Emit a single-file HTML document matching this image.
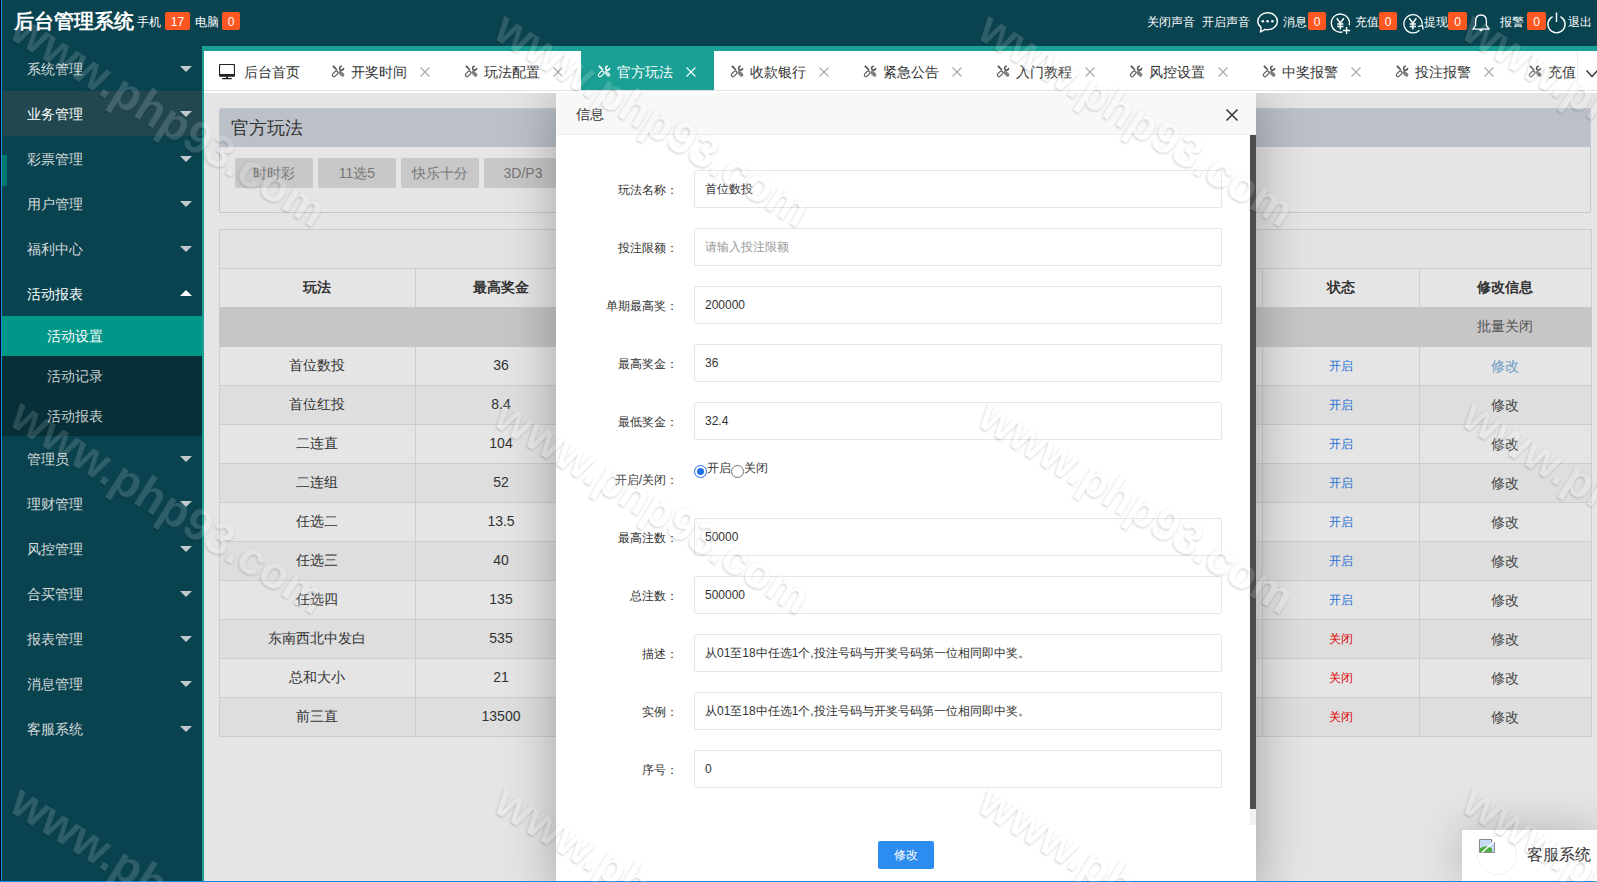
<!DOCTYPE html><html><head><meta charset="utf-8"><style>
*{margin:0;padding:0;box-sizing:border-box}
html,body{width:1597px;height:882px;overflow:hidden;background:#e5e5e5;font-family:"Liberation Sans",sans-serif;font-size:14px;color:#333}
div,span{position:absolute;white-space:nowrap}
svg{position:absolute;overflow:visible}
#hdr{left:0;top:0;width:1597px;height:46px;background:#09434f}
.t{line-height:1}
.badge{background:#ff5722;color:#fff;font-size:12px;text-align:center;border-radius:2px}
#side{left:0;top:46px;width:202px;height:836px;background:#09434f;overflow:hidden}
.mi{left:0;width:202px;height:45px;color:#d5dadb;font-size:14px}
.mi span{left:27px;top:15px;line-height:16px}
.tri{left:180px;top:20px;width:0;height:0;border-left:6px solid transparent;border-right:6px solid transparent;border-top:6px solid #c2c9cc}
.triu{left:180px;top:19px;width:0;height:0;border-left:6px solid transparent;border-right:6px solid transparent;border-bottom:6px solid #fff}
.sub{left:0;width:202px;height:40px;background:#062f38;color:#c9cfd1}
.sub span{left:47px;top:12px;line-height:16px}
#tabframe{left:202px;top:46px;width:1395px;height:836px;background:#1aa094}
#tabs{left:204px;top:51px;width:1393px;height:39px;background:#fff}
.tab{top:0;height:39px;color:#333;font-size:14px}
.tab span{top:12px;line-height:16px}
.tab.act{background:#1aa094;color:#fff}
.wm{font-family:'Liberation Sans',sans-serif;font-weight:bold;font-size:46px;line-height:1;color:#fff;filter:url(#wmf);transform-origin:0 0;transform:rotate(32deg)}
#content{left:204px;top:90px;width:1393px;height:792px;background:#e5e5e5;overflow:hidden}
</style></head><body>
<div id="hdr">
<span class="t" style="left:14px;top:11px;font-size:20px;font-weight:bold;color:#fff">后台管理系统</span>
<span class="t" style="left:137px;top:16px;font-size:12px;color:#fff">手机</span>
<span class="badge t" style="left:165px;top:12px;width:25px;height:18px;line-height:20px">17</span>
<span class="t" style="left:195px;top:16px;font-size:12px;color:#fff">电脑</span>
<span class="badge t" style="left:222px;top:12px;width:18px;height:18px;line-height:20px">0</span>
<span class="t" style="left:1147px;top:16px;font-size:12px;color:#fff">关闭声音</span>
<span class="t" style="left:1202px;top:16px;font-size:12px;color:#fff">开启声音</span>
<svg style="left:1257px;top:12px" width="22" height="21" viewBox="0 0 22 21"><path d="M10.6 0.8C5.2 0.8 0.8 4.5 0.8 9.2c0 2.5 1.3 4.7 3.3 6.2L3.5 20l4.6-2.6c0.8 0.2 1.6 0.3 2.5 0.3 5.4 0 9.8-3.8 9.8-8.5S16 0.8 10.6 0.8z" fill="none" stroke="#fff" stroke-width="1.4" stroke-linejoin="round"/><circle cx="5.8" cy="9.3" r="1.3" fill="#fff"/><circle cx="10.6" cy="9.3" r="1.3" fill="#fff"/><circle cx="15.4" cy="9.3" r="1.3" fill="#fff"/></svg>
<span class="t" style="left:1283px;top:16px;font-size:12px;color:#fff">消息</span>
<span class="badge t" style="left:1308px;top:12px;width:18px;height:18px;line-height:20px">0</span>
<svg style="left:1331px;top:13px" width="20" height="21" viewBox="0 0 20 21"><path d="M11.7 18.9A9.1 9.1 0 1 1 18.2 12.4" fill="none" stroke="#fff" stroke-width="1.3"/><path d="M5.8 5.2L9.3 10.2L12.8 5.2M9.3 10.2V16.5M6.2 11H12.4M6.2 13.6H12.4" fill="none" stroke="#fff" stroke-width="1.5"/><path d="M15.6 14V21M12.1 17.5H19.1" stroke="#fff" stroke-width="1.4"/></svg>
<span class="t" style="left:1355px;top:16px;font-size:12px;color:#fff">充值</span>
<span class="badge t" style="left:1379px;top:12px;width:18px;height:18px;line-height:20px">0</span>
<svg style="left:1403px;top:13px" width="21" height="21" viewBox="0 0 21 21"><path d="M16.5 17.2A9.1 9.1 0 1 1 19.1 11.5" fill="none" stroke="#fff" stroke-width="1.3"/><path d="M15.2 13.6L19.3 12.3L20.2 16.5" fill="none" stroke="#fff" stroke-width="1.3"/><path d="M6.3 5.2L9.8 10.2L13.3 5.2M9.8 10.2V16.5M6.7 11H12.9M6.7 13.6H12.9" fill="none" stroke="#fff" stroke-width="1.5"/></svg>
<span class="t" style="left:1424px;top:16px;font-size:12px;color:#fff">提现</span>
<span class="badge t" style="left:1448px;top:12px;width:19px;height:18px;line-height:20px">0</span>
<svg style="left:1472px;top:14px" width="18" height="18" viewBox="0 0 18 18"><path d="M9 1C5.4 1 3.6 3.8 3.6 7.2V11.5L1 15.2H17L14.4 11.5V7.2C14.4 3.8 12.6 1 9 1Z" fill="none" stroke="#fff" stroke-width="1.3" stroke-linejoin="round"/><path d="M7.6 15.4A1.4 1.4 0 0 0 10.4 15.4" fill="#fff" stroke="#fff" stroke-width="1"/></svg>
<span class="t" style="left:1500px;top:16px;font-size:12px;color:#fff">报警</span>
<span class="badge t" style="left:1527px;top:12px;width:19px;height:18px;line-height:20px">0</span>
<svg style="left:1547px;top:12px" width="20" height="21" viewBox="0 0 20 21"><path d="M5.6 4.6A8.6 8.6 0 1 0 13.4 4.6" fill="none" stroke="#fff" stroke-width="1.4"/><path d="M9.5 0.5V10" stroke="#fff" stroke-width="1.4"/></svg>
<span class="t" style="left:1568px;top:16px;font-size:12px;color:#fff">退出</span>
</div>
<div id="side">
<div class="mi" style="top:0px;"><span>系统管理</span><div class="tri"></div></div>
<div class="mi" style="top:45px;background:#22474f;color:#fff;"><span>业务管理</span><div class="tri"></div></div>
<div class="mi" style="top:90px;"><span>彩票管理</span><div class="tri"></div></div>
<div class="mi" style="top:135px;"><span>用户管理</span><div class="tri"></div></div>
<div class="mi" style="top:180px;"><span>福利中心</span><div class="tri"></div></div>
<div class="mi" style="top:225px;color:#fff;"><span>活动报表</span><div class="triu"></div></div>
<div class="sub" style="top:270px;background:#009688;color:#fff;"><span>活动设置</span></div>
<div class="sub" style="top:310px;"><span>活动记录</span></div>
<div class="sub" style="top:350px;"><span>活动报表</span></div>
<div class="mi" style="top:390px"><span>管理员</span><div class="tri"></div></div>
<div class="mi" style="top:435px"><span>理财管理</span><div class="tri"></div></div>
<div class="mi" style="top:480px"><span>风控管理</span><div class="tri"></div></div>
<div class="mi" style="top:525px"><span>合买管理</span><div class="tri"></div></div>
<div class="mi" style="top:570px"><span>报表管理</span><div class="tri"></div></div>
<div class="mi" style="top:615px"><span>消息管理</span><div class="tri"></div></div>
<div class="mi" style="top:660px"><span>客服系统</span><div class="tri"></div></div>
<div style="left:2px;top:109px;width:5px;height:31px;background:#00786e"></div>
</div>
<div style="left:0;top:0;width:1px;height:882px;background:#030b1f"></div><div style="left:1px;top:0;width:1px;height:882px;background:#1a88e0"></div>
<div id="tabframe"></div>
<div id="tabs">
<svg style="left:15px;top:13px" width="16" height="16" viewBox="0 0 16 16"><path fill-rule="evenodd" d="M1 0H15Q16 0 16 1V11.7Q16 12.7 15 12.7H1Q0 12.7 0 11.7V1Q0 0 1 0ZM1.1 1.1V10.1H14.9V1.1Z" fill="#222"/><rect x="7" y="12.5" width="2" height="1.6" fill="#222"/><rect x="3" y="14" width="10" height="1.2" rx="0.6" fill="#222"/></svg>
<span class="t" style="left:40px;top:14px;font-size:14px;color:#333">后台首页</span>
<svg style="left:128px;top:14px" width="13" height="12" viewBox="0 0 13 12"><g fill="#555" stroke="#555"><path d="M0.3 1.5L1.5 0.3L2.6 1.2L5.5 4.5L4.5 5.5L1.2 2.6Z" stroke="none"/><g transform="rotate(45 3.2 8.8)"><rect x="1.5" y="5.6" width="3.4" height="6.6" rx="1.7" fill="none" stroke-width="1.1"/></g><g transform="rotate(-45 9.3 8.6)"><rect x="7.5" y="5.2" width="3.6" height="7" rx="1.8" stroke="none" fill-opacity=".75"/></g><path d="M11.5 2.9A1.95 1.95 0 1 1 9.9 1.3" fill="none" stroke-width="1.6"/></g></svg>
<span class="t" style="left:147px;top:14px;font-size:14px;color:#333">开奖时间</span>
<svg style="left:216px;top:16px" width="10" height="10" viewBox="0 0 10 10"><path d="M0.5 0.5l9 9M9.5 0.5l-9 9" stroke="#a8a8a8" stroke-width="1.1"/></svg>
<svg style="left:261px;top:14px" width="13" height="12" viewBox="0 0 13 12"><g fill="#555" stroke="#555"><path d="M0.3 1.5L1.5 0.3L2.6 1.2L5.5 4.5L4.5 5.5L1.2 2.6Z" stroke="none"/><g transform="rotate(45 3.2 8.8)"><rect x="1.5" y="5.6" width="3.4" height="6.6" rx="1.7" fill="none" stroke-width="1.1"/></g><g transform="rotate(-45 9.3 8.6)"><rect x="7.5" y="5.2" width="3.6" height="7" rx="1.8" stroke="none" fill-opacity=".75"/></g><path d="M11.5 2.9A1.95 1.95 0 1 1 9.9 1.3" fill="none" stroke-width="1.6"/></g></svg>
<span class="t" style="left:280px;top:14px;font-size:14px;color:#333">玩法配置</span>
<svg style="left:349px;top:16px" width="10" height="10" viewBox="0 0 10 10"><path d="M0.5 0.5l9 9M9.5 0.5l-9 9" stroke="#a8a8a8" stroke-width="1.1"/></svg>
<div style="left:377px;top:0;width:133px;height:39px;background:#1aa094"></div>
<svg style="left:394px;top:14px" width="13" height="12" viewBox="0 0 13 12"><g fill="#fff" stroke="#fff"><path d="M0.3 1.5L1.5 0.3L2.6 1.2L5.5 4.5L4.5 5.5L1.2 2.6Z" stroke="none"/><g transform="rotate(45 3.2 8.8)"><rect x="1.5" y="5.6" width="3.4" height="6.6" rx="1.7" fill="none" stroke-width="1.1"/></g><g transform="rotate(-45 9.3 8.6)"><rect x="7.5" y="5.2" width="3.6" height="7" rx="1.8" stroke="none" fill-opacity=".75"/></g><path d="M11.5 2.9A1.95 1.95 0 1 1 9.9 1.3" fill="none" stroke-width="1.6"/></g></svg>
<span class="t" style="left:413px;top:14px;font-size:14px;color:#fff">官方玩法</span>
<svg style="left:482px;top:16px" width="10" height="10" viewBox="0 0 10 10"><path d="M0.5 0.5l9 9M9.5 0.5l-9 9" stroke="#fff" stroke-width="1.1"/></svg>
<svg style="left:527px;top:14px" width="13" height="12" viewBox="0 0 13 12"><g fill="#555" stroke="#555"><path d="M0.3 1.5L1.5 0.3L2.6 1.2L5.5 4.5L4.5 5.5L1.2 2.6Z" stroke="none"/><g transform="rotate(45 3.2 8.8)"><rect x="1.5" y="5.6" width="3.4" height="6.6" rx="1.7" fill="none" stroke-width="1.1"/></g><g transform="rotate(-45 9.3 8.6)"><rect x="7.5" y="5.2" width="3.6" height="7" rx="1.8" stroke="none" fill-opacity=".75"/></g><path d="M11.5 2.9A1.95 1.95 0 1 1 9.9 1.3" fill="none" stroke-width="1.6"/></g></svg>
<span class="t" style="left:546px;top:14px;font-size:14px;color:#333">收款银行</span>
<svg style="left:615px;top:16px" width="10" height="10" viewBox="0 0 10 10"><path d="M0.5 0.5l9 9M9.5 0.5l-9 9" stroke="#a8a8a8" stroke-width="1.1"/></svg>
<svg style="left:660px;top:14px" width="13" height="12" viewBox="0 0 13 12"><g fill="#555" stroke="#555"><path d="M0.3 1.5L1.5 0.3L2.6 1.2L5.5 4.5L4.5 5.5L1.2 2.6Z" stroke="none"/><g transform="rotate(45 3.2 8.8)"><rect x="1.5" y="5.6" width="3.4" height="6.6" rx="1.7" fill="none" stroke-width="1.1"/></g><g transform="rotate(-45 9.3 8.6)"><rect x="7.5" y="5.2" width="3.6" height="7" rx="1.8" stroke="none" fill-opacity=".75"/></g><path d="M11.5 2.9A1.95 1.95 0 1 1 9.9 1.3" fill="none" stroke-width="1.6"/></g></svg>
<span class="t" style="left:679px;top:14px;font-size:14px;color:#333">紧急公告</span>
<svg style="left:748px;top:16px" width="10" height="10" viewBox="0 0 10 10"><path d="M0.5 0.5l9 9M9.5 0.5l-9 9" stroke="#a8a8a8" stroke-width="1.1"/></svg>
<svg style="left:793px;top:14px" width="13" height="12" viewBox="0 0 13 12"><g fill="#555" stroke="#555"><path d="M0.3 1.5L1.5 0.3L2.6 1.2L5.5 4.5L4.5 5.5L1.2 2.6Z" stroke="none"/><g transform="rotate(45 3.2 8.8)"><rect x="1.5" y="5.6" width="3.4" height="6.6" rx="1.7" fill="none" stroke-width="1.1"/></g><g transform="rotate(-45 9.3 8.6)"><rect x="7.5" y="5.2" width="3.6" height="7" rx="1.8" stroke="none" fill-opacity=".75"/></g><path d="M11.5 2.9A1.95 1.95 0 1 1 9.9 1.3" fill="none" stroke-width="1.6"/></g></svg>
<span class="t" style="left:812px;top:14px;font-size:14px;color:#333">入门教程</span>
<svg style="left:881px;top:16px" width="10" height="10" viewBox="0 0 10 10"><path d="M0.5 0.5l9 9M9.5 0.5l-9 9" stroke="#a8a8a8" stroke-width="1.1"/></svg>
<svg style="left:926px;top:14px" width="13" height="12" viewBox="0 0 13 12"><g fill="#555" stroke="#555"><path d="M0.3 1.5L1.5 0.3L2.6 1.2L5.5 4.5L4.5 5.5L1.2 2.6Z" stroke="none"/><g transform="rotate(45 3.2 8.8)"><rect x="1.5" y="5.6" width="3.4" height="6.6" rx="1.7" fill="none" stroke-width="1.1"/></g><g transform="rotate(-45 9.3 8.6)"><rect x="7.5" y="5.2" width="3.6" height="7" rx="1.8" stroke="none" fill-opacity=".75"/></g><path d="M11.5 2.9A1.95 1.95 0 1 1 9.9 1.3" fill="none" stroke-width="1.6"/></g></svg>
<span class="t" style="left:945px;top:14px;font-size:14px;color:#333">风控设置</span>
<svg style="left:1014px;top:16px" width="10" height="10" viewBox="0 0 10 10"><path d="M0.5 0.5l9 9M9.5 0.5l-9 9" stroke="#a8a8a8" stroke-width="1.1"/></svg>
<svg style="left:1059px;top:14px" width="13" height="12" viewBox="0 0 13 12"><g fill="#555" stroke="#555"><path d="M0.3 1.5L1.5 0.3L2.6 1.2L5.5 4.5L4.5 5.5L1.2 2.6Z" stroke="none"/><g transform="rotate(45 3.2 8.8)"><rect x="1.5" y="5.6" width="3.4" height="6.6" rx="1.7" fill="none" stroke-width="1.1"/></g><g transform="rotate(-45 9.3 8.6)"><rect x="7.5" y="5.2" width="3.6" height="7" rx="1.8" stroke="none" fill-opacity=".75"/></g><path d="M11.5 2.9A1.95 1.95 0 1 1 9.9 1.3" fill="none" stroke-width="1.6"/></g></svg>
<span class="t" style="left:1078px;top:14px;font-size:14px;color:#333">中奖报警</span>
<svg style="left:1147px;top:16px" width="10" height="10" viewBox="0 0 10 10"><path d="M0.5 0.5l9 9M9.5 0.5l-9 9" stroke="#a8a8a8" stroke-width="1.1"/></svg>
<svg style="left:1192px;top:14px" width="13" height="12" viewBox="0 0 13 12"><g fill="#555" stroke="#555"><path d="M0.3 1.5L1.5 0.3L2.6 1.2L5.5 4.5L4.5 5.5L1.2 2.6Z" stroke="none"/><g transform="rotate(45 3.2 8.8)"><rect x="1.5" y="5.6" width="3.4" height="6.6" rx="1.7" fill="none" stroke-width="1.1"/></g><g transform="rotate(-45 9.3 8.6)"><rect x="7.5" y="5.2" width="3.6" height="7" rx="1.8" stroke="none" fill-opacity=".75"/></g><path d="M11.5 2.9A1.95 1.95 0 1 1 9.9 1.3" fill="none" stroke-width="1.6"/></g></svg>
<span class="t" style="left:1211px;top:14px;font-size:14px;color:#333">投注报警</span>
<svg style="left:1280px;top:16px" width="10" height="10" viewBox="0 0 10 10"><path d="M0.5 0.5l9 9M9.5 0.5l-9 9" stroke="#a8a8a8" stroke-width="1.1"/></svg>
<svg style="left:1325px;top:14px" width="13" height="12" viewBox="0 0 13 12"><g fill="#555" stroke="#555"><path d="M0.3 1.5L1.5 0.3L2.6 1.2L5.5 4.5L4.5 5.5L1.2 2.6Z" stroke="none"/><g transform="rotate(45 3.2 8.8)"><rect x="1.5" y="5.6" width="3.4" height="6.6" rx="1.7" fill="none" stroke-width="1.1"/></g><g transform="rotate(-45 9.3 8.6)"><rect x="7.5" y="5.2" width="3.6" height="7" rx="1.8" stroke="none" fill-opacity=".75"/></g><path d="M11.5 2.9A1.95 1.95 0 1 1 9.9 1.3" fill="none" stroke-width="1.6"/></g></svg>
<span class="t" style="left:1344px;top:14px;font-size:14px;color:#333">充值</span>
<div style="left:1373px;top:0;width:20px;height:39px;background:#fff;border-left:1px solid #eee"></div>
<svg style="left:1382px;top:19px" width="12" height="8" viewBox="0 0 12 8"><path d="M0.5 0.5l5.5 6 5.5-6" stroke="#333" stroke-width="1.4" fill="none"/></svg>
</div>
<div id="content">
<div style="left:15px;top:18px;width:1372px;height:105px;border:1px solid #c3c7ce;border-radius:2px;background:#e5e5e5"></div>
<div style="left:16px;top:19px;width:1370px;height:38px;background:#bcc1c9"></div>
<span class="t" style="left:27px;top:29px;font-size:18px;color:#333">官方玩法</span>
<div style="left:31px;top:68px;width:78px;height:30px;background:#c8c8c8;border-radius:2px;color:#777;font-size:14px;text-align:center;line-height:30px">时时彩</div>
<div style="left:114px;top:68px;width:78px;height:30px;background:#c8c8c8;border-radius:2px;color:#777;font-size:14px;text-align:center;line-height:30px">11选5</div>
<div style="left:197px;top:68px;width:78px;height:30px;background:#c8c8c8;border-radius:2px;color:#777;font-size:14px;text-align:center;line-height:30px">快乐十分</div>
<div style="left:280px;top:68px;width:78px;height:30px;background:#c8c8c8;border-radius:2px;color:#777;font-size:14px;text-align:center;line-height:30px">3D/P3</div>
<div style="left:15px;top:139px;width:1373px;height:40px;background:#e3e3e3;border:1px solid #cdcdcd"></div>
<div style="left:15px;top:178px;width:1373px;height:40px;background:#e5e5e5;border:1px solid #cdcdcd"></div>
<div style="left:15px;top:217px;width:1373px;height:40px;background:#c6c6c6"></div>
<div style="left:15px;top:256px;width:1373px;height:40px;background:#e5e5e5;border:1px solid #cdcdcd"></div>
<div style="left:15px;top:295px;width:1373px;height:40px;background:#dedede;border:1px solid #cdcdcd"></div>
<div style="left:15px;top:334px;width:1373px;height:40px;background:#e5e5e5;border:1px solid #cdcdcd"></div>
<div style="left:15px;top:373px;width:1373px;height:40px;background:#dedede;border:1px solid #cdcdcd"></div>
<div style="left:15px;top:412px;width:1373px;height:40px;background:#e5e5e5;border:1px solid #cdcdcd"></div>
<div style="left:15px;top:451px;width:1373px;height:40px;background:#dedede;border:1px solid #cdcdcd"></div>
<div style="left:15px;top:490px;width:1373px;height:40px;background:#e5e5e5;border:1px solid #cdcdcd"></div>
<div style="left:15px;top:529px;width:1373px;height:40px;background:#dedede;border:1px solid #cdcdcd"></div>
<div style="left:15px;top:568px;width:1373px;height:40px;background:#e5e5e5;border:1px solid #cdcdcd"></div>
<div style="left:15px;top:607px;width:1373px;height:40px;background:#dedede;border:1px solid #cdcdcd"></div>
<div style="left:15px;top:178px;width:1px;height:469px;background:#cdcdcd"></div>
<div style="left:211px;top:178px;width:1px;height:469px;background:#cdcdcd"></div>
<div style="left:383px;top:178px;width:1px;height:469px;background:#cdcdcd"></div>
<div style="left:556px;top:178px;width:1px;height:469px;background:#cdcdcd"></div>
<div style="left:726px;top:178px;width:1px;height:469px;background:#cdcdcd"></div>
<div style="left:896px;top:178px;width:1px;height:469px;background:#cdcdcd"></div>
<div style="left:1058px;top:178px;width:1px;height:469px;background:#cdcdcd"></div>
<div style="left:1215px;top:178px;width:1px;height:469px;background:#cdcdcd"></div>
<div style="left:1387px;top:178px;width:1px;height:469px;background:#cdcdcd"></div>
<div style="left:15px;top:217px;width:1373px;height:40px;background:#c6c6c6"></div>
<div style="left:15px;top:178px;width:196px;height:39px;line-height:39px;text-align:center;font-size:14px;font-weight:bold;color:#333">玩法</div>
<div style="left:211px;top:178px;width:172px;height:39px;line-height:39px;text-align:center;font-size:14px;font-weight:bold;color:#333">最高奖金</div>
<div style="left:1058px;top:178px;width:157px;height:39px;line-height:39px;text-align:center;font-size:14px;font-weight:bold;color:#333">状态</div>
<div style="left:1215px;top:178px;width:172px;height:39px;line-height:39px;text-align:center;font-size:14px;font-weight:bold;color:#333">修改信息</div>
<div style="left:1215px;top:217px;width:172px;height:39px;line-height:39px;text-align:center;font-size:14px;color:#555">批量关闭</div>
<div style="left:15px;top:256px;width:196px;height:39px;line-height:39px;text-align:center;font-size:14px;color:#333">首位数投</div>
<div style="left:211px;top:256px;width:172px;height:39px;line-height:39px;text-align:center;font-size:14px;color:#333">36</div>
<div style="left:1058px;top:256px;width:157px;height:39px;line-height:39px;text-align:center;font-size:14px;font-size:12px;line-height:41px;color:#1e6fd6">开启</div>
<div style="left:1215px;top:256px;width:172px;height:39px;line-height:39px;text-align:center;font-size:14px;font-size:14px;line-height:40px;color:#6a9bc6">修改</div>
<div style="left:15px;top:295px;width:196px;height:39px;line-height:39px;text-align:center;font-size:14px;color:#333">首位红投</div>
<div style="left:211px;top:295px;width:172px;height:39px;line-height:39px;text-align:center;font-size:14px;color:#333">8.4</div>
<div style="left:1058px;top:295px;width:157px;height:39px;line-height:39px;text-align:center;font-size:14px;font-size:12px;line-height:41px;color:#1e6fd6">开启</div>
<div style="left:1215px;top:295px;width:172px;height:39px;line-height:39px;text-align:center;font-size:14px;font-size:14px;line-height:40px;color:#444">修改</div>
<div style="left:15px;top:334px;width:196px;height:39px;line-height:39px;text-align:center;font-size:14px;color:#333">二连直</div>
<div style="left:211px;top:334px;width:172px;height:39px;line-height:39px;text-align:center;font-size:14px;color:#333">104</div>
<div style="left:1058px;top:334px;width:157px;height:39px;line-height:39px;text-align:center;font-size:14px;font-size:12px;line-height:41px;color:#1e6fd6">开启</div>
<div style="left:1215px;top:334px;width:172px;height:39px;line-height:39px;text-align:center;font-size:14px;font-size:14px;line-height:40px;color:#444">修改</div>
<div style="left:15px;top:373px;width:196px;height:39px;line-height:39px;text-align:center;font-size:14px;color:#333">二连组</div>
<div style="left:211px;top:373px;width:172px;height:39px;line-height:39px;text-align:center;font-size:14px;color:#333">52</div>
<div style="left:1058px;top:373px;width:157px;height:39px;line-height:39px;text-align:center;font-size:14px;font-size:12px;line-height:41px;color:#1e6fd6">开启</div>
<div style="left:1215px;top:373px;width:172px;height:39px;line-height:39px;text-align:center;font-size:14px;font-size:14px;line-height:40px;color:#444">修改</div>
<div style="left:15px;top:412px;width:196px;height:39px;line-height:39px;text-align:center;font-size:14px;color:#333">任选二</div>
<div style="left:211px;top:412px;width:172px;height:39px;line-height:39px;text-align:center;font-size:14px;color:#333">13.5</div>
<div style="left:1058px;top:412px;width:157px;height:39px;line-height:39px;text-align:center;font-size:14px;font-size:12px;line-height:41px;color:#1e6fd6">开启</div>
<div style="left:1215px;top:412px;width:172px;height:39px;line-height:39px;text-align:center;font-size:14px;font-size:14px;line-height:40px;color:#444">修改</div>
<div style="left:15px;top:451px;width:196px;height:39px;line-height:39px;text-align:center;font-size:14px;color:#333">任选三</div>
<div style="left:211px;top:451px;width:172px;height:39px;line-height:39px;text-align:center;font-size:14px;color:#333">40</div>
<div style="left:1058px;top:451px;width:157px;height:39px;line-height:39px;text-align:center;font-size:14px;font-size:12px;line-height:41px;color:#1e6fd6">开启</div>
<div style="left:1215px;top:451px;width:172px;height:39px;line-height:39px;text-align:center;font-size:14px;font-size:14px;line-height:40px;color:#444">修改</div>
<div style="left:15px;top:490px;width:196px;height:39px;line-height:39px;text-align:center;font-size:14px;color:#333">任选四</div>
<div style="left:211px;top:490px;width:172px;height:39px;line-height:39px;text-align:center;font-size:14px;color:#333">135</div>
<div style="left:1058px;top:490px;width:157px;height:39px;line-height:39px;text-align:center;font-size:14px;font-size:12px;line-height:41px;color:#1e6fd6">开启</div>
<div style="left:1215px;top:490px;width:172px;height:39px;line-height:39px;text-align:center;font-size:14px;font-size:14px;line-height:40px;color:#444">修改</div>
<div style="left:15px;top:529px;width:196px;height:39px;line-height:39px;text-align:center;font-size:14px;color:#333">东南西北中发白</div>
<div style="left:211px;top:529px;width:172px;height:39px;line-height:39px;text-align:center;font-size:14px;color:#333">535</div>
<div style="left:1058px;top:529px;width:157px;height:39px;line-height:39px;text-align:center;font-size:14px;font-size:12px;line-height:41px;color:#e00000">关闭</div>
<div style="left:1215px;top:529px;width:172px;height:39px;line-height:39px;text-align:center;font-size:14px;font-size:14px;line-height:40px;color:#444">修改</div>
<div style="left:15px;top:568px;width:196px;height:39px;line-height:39px;text-align:center;font-size:14px;color:#333">总和大小</div>
<div style="left:211px;top:568px;width:172px;height:39px;line-height:39px;text-align:center;font-size:14px;color:#333">21</div>
<div style="left:1058px;top:568px;width:157px;height:39px;line-height:39px;text-align:center;font-size:14px;font-size:12px;line-height:41px;color:#e00000">关闭</div>
<div style="left:1215px;top:568px;width:172px;height:39px;line-height:39px;text-align:center;font-size:14px;font-size:14px;line-height:40px;color:#444">修改</div>
<div style="left:15px;top:607px;width:196px;height:39px;line-height:39px;text-align:center;font-size:14px;color:#333">前三直</div>
<div style="left:211px;top:607px;width:172px;height:39px;line-height:39px;text-align:center;font-size:14px;color:#333">13500</div>
<div style="left:1058px;top:607px;width:157px;height:39px;line-height:39px;text-align:center;font-size:14px;font-size:12px;line-height:41px;color:#e00000">关闭</div>
<div style="left:1215px;top:607px;width:172px;height:39px;line-height:39px;text-align:center;font-size:14px;font-size:14px;line-height:40px;color:#444">修改</div>
</div>
<div style="left:0;top:93px;width:1597px;height:789px;overflow:hidden"><div style="left:0;top:-93px;width:1597px;height:882px">
<div style="left:556px;top:93px;width:700px;height:800px;background:#fff;box-shadow:1px 1px 50px rgba(0,0,0,.3)"></div>
<div style="left:556px;top:93px;width:700px;height:42px;background:#f8f8f8;border-bottom:1px solid #eee"></div>
<span class="t" style="left:576px;top:107px;font-size:14px;color:#333">信息</span>
<svg style="left:1226px;top:109px" width="12" height="12" viewBox="0 0 12 12"><path d="M0.5 0.5l11 11M11.5 0.5l-11 11" stroke="#333" stroke-width="1.5"/></svg>
<div style="left:1250px;top:135px;width:6px;height:674px;background:#4d4d4d"></div>
<div style="left:1250px;top:809px;width:6px;height:16px;background:#f1f1f1"></div>
<div style="left:562px;top:171px;width:116px;height:38px;line-height:38px;text-align:right;font-size:12px;color:#333">玩法名称：</div>
<div style="left:694px;top:170px;width:528px;height:38px;border:1px solid #e6e6e6;border-radius:2px;background:#fff"></div>
<span class="t" style="left:705px;top:183px;font-size:12px;color:#333">首位数投</span>
<div style="left:562px;top:229px;width:116px;height:38px;line-height:38px;text-align:right;font-size:12px;color:#333">投注限额：</div>
<div style="left:694px;top:228px;width:528px;height:38px;border:1px solid #e6e6e6;border-radius:2px;background:#fff"></div>
<span class="t" style="left:705px;top:241px;font-size:12px;color:#999">请输入投注限额</span>
<div style="left:562px;top:287px;width:116px;height:38px;line-height:38px;text-align:right;font-size:12px;color:#333">单期最高奖：</div>
<div style="left:694px;top:286px;width:528px;height:38px;border:1px solid #e6e6e6;border-radius:2px;background:#fff"></div>
<span class="t" style="left:705px;top:299px;font-size:12px;color:#333">200000</span>
<div style="left:562px;top:345px;width:116px;height:38px;line-height:38px;text-align:right;font-size:12px;color:#333">最高奖金：</div>
<div style="left:694px;top:344px;width:528px;height:38px;border:1px solid #e6e6e6;border-radius:2px;background:#fff"></div>
<span class="t" style="left:705px;top:357px;font-size:12px;color:#333">36</span>
<div style="left:562px;top:403px;width:116px;height:38px;line-height:38px;text-align:right;font-size:12px;color:#333">最低奖金：</div>
<div style="left:694px;top:402px;width:528px;height:38px;border:1px solid #e6e6e6;border-radius:2px;background:#fff"></div>
<span class="t" style="left:705px;top:415px;font-size:12px;color:#333">32.4</span>
<div style="left:562px;top:461px;width:116px;height:38px;line-height:38px;text-align:right;font-size:12px;color:#333">开启/关闭：</div>
<div style="left:694px;top:465px;width:13px;height:13px;border-radius:50%;border:1px solid #1e6fe8;background:#fff"></div>
<div style="left:697px;top:468px;width:7px;height:7px;border-radius:50%;background:#1e6fe8"></div>
<span class="t" style="left:707px;top:462px;font-size:12px;color:#333">开启</span>
<div style="left:731px;top:465px;width:13px;height:13px;border-radius:50%;border:1px solid #767676;background:#fff"></div>
<span class="t" style="left:744px;top:462px;font-size:12px;color:#333">关闭</span>
<div style="left:562px;top:519px;width:116px;height:38px;line-height:38px;text-align:right;font-size:12px;color:#333">最高注数：</div>
<div style="left:694px;top:518px;width:528px;height:38px;border:1px solid #e6e6e6;border-radius:2px;background:#fff"></div>
<span class="t" style="left:705px;top:531px;font-size:12px;color:#333">50000</span>
<div style="left:562px;top:577px;width:116px;height:38px;line-height:38px;text-align:right;font-size:12px;color:#333">总注数：</div>
<div style="left:694px;top:576px;width:528px;height:38px;border:1px solid #e6e6e6;border-radius:2px;background:#fff"></div>
<span class="t" style="left:705px;top:589px;font-size:12px;color:#333">500000</span>
<div style="left:562px;top:635px;width:116px;height:38px;line-height:38px;text-align:right;font-size:12px;color:#333">描述：</div>
<div style="left:694px;top:634px;width:528px;height:38px;border:1px solid #e6e6e6;border-radius:2px;background:#fff"></div>
<span class="t" style="left:705px;top:647px;font-size:12px;color:#333">从01至18中任选1个,投注号码与开奖号码第一位相同即中奖。</span>
<div style="left:562px;top:693px;width:116px;height:38px;line-height:38px;text-align:right;font-size:12px;color:#333">实例：</div>
<div style="left:694px;top:692px;width:528px;height:38px;border:1px solid #e6e6e6;border-radius:2px;background:#fff"></div>
<span class="t" style="left:705px;top:705px;font-size:12px;color:#333">从01至18中任选1个,投注号码与开奖号码第一位相同即中奖。</span>
<div style="left:562px;top:751px;width:116px;height:38px;line-height:38px;text-align:right;font-size:12px;color:#333">序号：</div>
<div style="left:694px;top:750px;width:528px;height:38px;border:1px solid #e6e6e6;border-radius:2px;background:#fff"></div>
<span class="t" style="left:705px;top:763px;font-size:12px;color:#333">0</span>
<div style="left:878px;top:841px;width:56px;height:28px;background:#2d8cf0;border-radius:2px;color:#fff;font-size:12px;text-align:center;line-height:28px">修改</div>
</div></div>
<div style="left:204px;top:90px;width:1393px;height:3px;background:#fff;border-top:1px solid #e2e2e2"></div>
<div style="left:1462px;top:830px;width:135px;height:51px;background:#fff;box-shadow:0 0 45px rgba(0,0,0,.22)"></div>
<span class="t" style="left:1527px;top:847px;font-size:16px;color:#333">客服系统</span>
<div style="left:1477px;top:835px;width:40px;height:40px;border-radius:50%;border:1px solid rgba(0,0,0,.06)"></div>
<svg style="left:1479px;top:837px" width="16" height="16" viewBox="0 0 16 16"><path d="M0.5 2.5V15.5H15.5V5.5L12.5 2.5Z" fill="#c7dbf5" stroke="#8a8a8a" stroke-width="1"/><path d="M12.5 2.5V5.5H15.5" fill="#fff" stroke="#8a8a8a" stroke-width="1"/><path d="M1 15V11.5Q7 7 13 11.5V15Z" fill="#4caf3a"/><path d="M3 15.5L15.5 4" stroke="#fff" stroke-width="1.6"/></svg>
<div style="left:0;top:881px;width:1597px;height:1px;background:#1a88e0"></div>
<svg width="0" height="0" style="left:0;top:0"><filter id="wmf" x="-5%" y="-20%" width="110%" height="140%" color-interpolation-filters="sRGB"><feGaussianBlur in="SourceAlpha" stdDeviation="0.8" result="b"/><feOffset in="b" dx="0" dy="1.2" result="o"/><feComposite in="o" in2="SourceAlpha" operator="out" result="sh"/><feColorMatrix in="sh" type="matrix" values="0 0 0 0 0  0 0 0 0 0  0 0 0 0 0  0 0 0 0.22 0" result="shc"/><feColorMatrix in="SourceGraphic" type="matrix" values="1 0 0 0 0  0 1 0 0 0  0 0 1 0 0  0 0 0 0.15 0" result="fill"/><feMerge><feMergeNode in="shc"/><feMergeNode in="fill"/></feMerge></filter></svg>
<div class="wm" style="left:28px;top:4px">www.php93.com</div>
<div class="wm" style="left:512px;top:4px">www.php93.com</div>
<div class="wm" style="left:996px;top:4px">www.php93.com</div>
<div class="wm" style="left:1480px;top:4px">www.php93.com</div>
<div class="wm" style="left:28px;top:391px">www.php93.com</div>
<div class="wm" style="left:512px;top:391px">www.php93.com</div>
<div class="wm" style="left:996px;top:391px">www.php93.com</div>
<div class="wm" style="left:1480px;top:391px">www.php93.com</div>
<div class="wm" style="left:28px;top:777px">www.php93.com</div>
<div class="wm" style="left:512px;top:777px">www.php93.com</div>
<div class="wm" style="left:996px;top:777px">www.php93.com</div>
<div class="wm" style="left:1480px;top:777px">www.php93.com</div>
</body></html>
